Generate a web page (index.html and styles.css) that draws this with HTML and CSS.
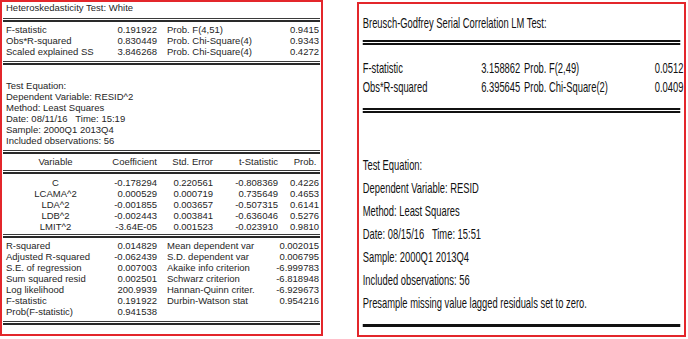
FILE: index.html
```html
<!DOCTYPE html>
<html>
<head>
<meta charset="utf-8">
<link rel="stylesheet" href="styles.css">
</head>
<body>
<div class="page">
  <section class="panel left">
    <div class="l-title">Heteroskedasticity Test: White</div>
    <div class="dline"></div>
    <div class="stats4 first">
      <span>F-statistic</span><span class="num">0.191922</span><span class="lbl2">Prob. F(4,51)</span><span class="num">0.9415</span>
      <span>Obs*R-squared</span><span class="num">0.830449</span><span class="lbl2">Prob. Chi-Square(4)</span><span class="num">0.9343</span>
      <span>Scaled explained SS</span><span class="num">3.846268</span><span class="lbl2">Prob. Chi-Square(4)</span><span class="num">0.4272</span>
    </div>
    <div class="dline"></div>
    <div class="l-info">
      <div>Test Equation:</div>
      <div>Dependent Variable: RESID^2</div>
      <div>Method: Least Squares</div>
      <div>Date: 08/11/16&nbsp;&nbsp; Time: 15:19</div>
      <div>Sample: 2000Q1 2013Q4</div>
      <div>Included observations: 56</div>
    </div>
    <div class="dline"></div>
    <div class="coef head">
      <span class="var">Variable</span><span class="num">Coefficient</span><span class="num">Std. Error</span><span class="num">t-Statistic</span><span class="num">Prob.&nbsp;</span>
    </div>
    <div class="dline"></div>
    <div class="coef body">
      <span class="var">C</span><span class="num">-0.178294</span><span class="num">0.220561</span><span class="num">-0.808369</span><span class="num">0.4226</span>
      <span class="var">LCAMA^2</span><span class="num">0.000529</span><span class="num">0.000719</span><span class="num">0.735649</span><span class="num">0.4653</span>
      <span class="var">LDA^2</span><span class="num">-0.001855</span><span class="num">0.003657</span><span class="num">-0.507315</span><span class="num">0.6141</span>
      <span class="var">LDB^2</span><span class="num">-0.002443</span><span class="num">0.003841</span><span class="num">-0.636046</span><span class="num">0.5276</span>
      <span class="var">LMIT^2</span><span class="num">-3.64E-05</span><span class="num">0.001523</span><span class="num">-0.023910</span><span class="num">0.9810</span>
    </div>
    <div class="dline"></div>
    <div class="stats4 second">
      <span>R-squared</span><span class="num">0.014829</span><span class="lbl2">Mean dependent var</span><span class="num">0.002015</span>
      <span>Adjusted R-squared</span><span class="num">-0.062439</span><span class="lbl2">S.D. dependent var</span><span class="num">0.006795</span>
      <span>S.E. of regression</span><span class="num">0.007003</span><span class="lbl2">Akaike info criterion</span><span class="num">-6.999783</span>
      <span>Sum squared resid</span><span class="num">0.002501</span><span class="lbl2">Schwarz criterion</span><span class="num">-6.818948</span>
      <span>Log likelihood</span><span class="num">200.9939</span><span class="lbl2">Hannan-Quinn criter.</span><span class="num">-6.929673</span>
      <span>F-statistic</span><span class="num">0.191922</span><span class="lbl2">Durbin-Watson stat</span><span class="num">0.954216</span>
      <span>Prob(F-statistic)</span><span class="num">0.941538</span><span class="lbl2"></span><span class="num"></span>
    </div>
    <div class="dline last"></div>
  </section>

  <section class="panel right">
    <div class="r-inner">
      <div class="r-title">Breusch-Godfrey Serial Correlation LM Test:</div>
      <div class="dline r-dl1"></div>
      <div class="r-stats">
        <span>F-statistic</span><span class="num">3.158862</span><span class="lbl2">Prob. F(2,49)</span><span class="num">0.0512</span>
        <span>Obs*R-squared</span><span class="num">6.395645</span><span class="lbl2">Prob. Chi-Square(2)</span><span class="num">0.0409</span>
      </div>
      <div class="dline r-dl2"></div>
      <div class="r-info">
        <div>Test Equation:</div>
        <div>Dependent Variable: RESID</div>
        <div>Method: Least Squares</div>
        <div>Date: 08/15/16&nbsp;&nbsp; Time: 15:51</div>
        <div>Sample: 2000Q1 2013Q4</div>
        <div>Included observations: 56</div>
        <div>Presample missing value lagged residuals set to zero.</div>
      </div>
      <div class="sline"></div>
    </div>
  </section>
</div>
</body>
</html>
```

FILE: styles.css
```css
* { box-sizing: border-box; }
html, body { margin: 0; padding: 0; background: #fff; }
body { width: 688px; height: 339px; overflow: hidden; }

.page {
  display: flex;
  align-items: flex-start;
  gap: 34px;
}

.panel {
  border: 2px solid #e3262b;
  background: #fff;
}

/* ---------- left panel ---------- */
.left {
  width: 323px;
  height: 336px;
  font-family: "Liberation Sans", Arial, sans-serif;
  font-size: 9.5px;
  color: #262626;
  padding: 0 1px;
}

.l-title {
  line-height: 12px;
  padding-left: 3px;
  margin-bottom: 4px;
}

.dline {
  height: 4px;
  border-top: 1px solid #3a3a3a;
  border-bottom: 2px solid #2a2a2a;
}

.stats4 {
  display: grid;
  grid-template-columns: 100px 51px 112px 50px;
  line-height: 11px;
  padding-left: 3px;
  white-space: nowrap;
}
.stats4.first { margin: 2px 0 4px; }
.stats4.second { margin: 2px 0 4px; }

.num { text-align: right; }
.lbl2 { padding-left: 10px; }

.l-info {
  margin: 15px 0 4px;
  padding-left: 3px;
  line-height: 11px;
}

.coef {
  display: grid;
  grid-template-columns: 99px 52px 56px 65px 41px;
  padding-left: 3px;
  white-space: nowrap;
}
.coef .var { text-align: center; }
.coef.head { line-height: 12px; padding-top: 2px; padding-bottom: 2px; }
.coef.body { line-height: 11px; margin: 3px 0 2px; }

/* ---------- right panel ---------- */
.right {
  width: 329px;
  height: 335px;
  margin-top: 2px;
  overflow: hidden;
  font-family: "Liberation Sans", Arial, sans-serif;
  font-size: 15px;
  color: #111;
}

.r-inner {
  width: 520px;
  transform: scaleX(0.625);
  transform-origin: left top;
}

.r-title {
  line-height: 16px;
  padding: 11px 0 0 6px;
  margin-bottom: 9px;
}

.r-dl1, .r-dl2 {
  margin: 0 6px 0 6px;
  height: 5px;
  border-top: 2px solid #111;
  border-bottom: 2px solid #111;
}

.r-stats {
  display: grid;
  grid-template-columns: 158px 94px 158px 103px;
  line-height: 19px;
  padding-left: 6px;
  margin: 13px 0 12px;
  white-space: nowrap;
}
.r-stats .lbl2 { padding-left: 6px; }

.r-info {
  line-height: 23px;
  padding-left: 6px;
  margin-top: 40px;
  white-space: nowrap;
}

.sline {
  margin: 10px 6px 0 6px;
  height: 3px;
  background: #111;
}
```
